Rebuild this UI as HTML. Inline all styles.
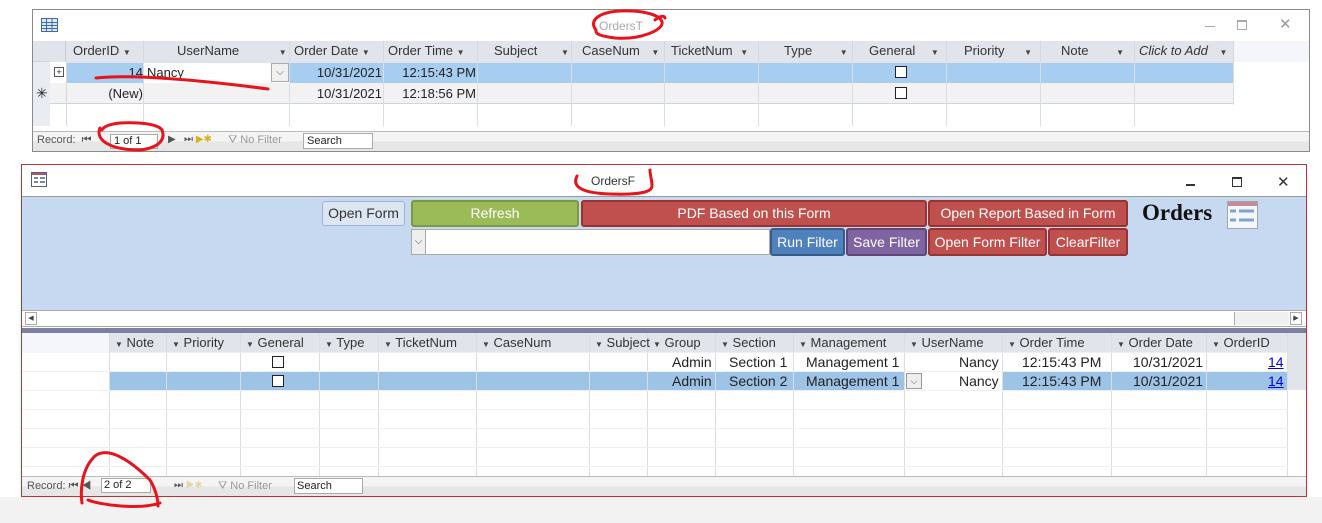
<!DOCTYPE html>
<html><head><meta charset="utf-8"><style>
*{box-sizing:border-box;margin:0;padding:0}
body{width:1322px;height:523px;background:#fff;position:relative;overflow:hidden;font-family:"Liberation Sans",sans-serif;font-size:13px;color:#222}
.a{position:absolute}
.c{position:absolute;border-right:1px solid #d4d8df;white-space:nowrap;overflow:hidden;line-height:20px}
.h{background:#e1e4ea;color:#333}
.dd{font-size:8px;color:#444}
.btn{position:absolute;border-radius:3px;color:#fff;font-size:14px;text-align:center;line-height:20px}
.cb{position:absolute;width:12px;height:12px;border:1px solid #222;background:#fff}
</style></head><body>
<div class="a" style="left:0;top:497px;width:1322px;height:26px;background:#f2f2f2"></div>

<!-- TOP WINDOW -->
<div class="a" style="left:32px;top:9px;width:1278px;height:143px;border:1px solid #8a8a8a;background:#fff"></div>
<svg class="a" style="left:41px;top:18px" width="18" height="15"><rect x="0.5" y="0.5" width="16" height="13" fill="#dfe9f7" stroke="#3d6aa8"/><path d="M1 4.5H16M1 7.5H16M1 10.5H16M5.5 1V14M11 1V14" stroke="#3d6aa8"/></svg>
<div class="a" style="left:599px;top:19px;color:#aaa;font-size:12px">OrdersT</div>
<div class="a" style="left:1205px;top:26px;width:10px;height:1px;background:#aaa"></div>
<div class="a" style="left:1237px;top:20px;width:10px;height:10px;border:1px solid #aaa;border-top-width:2px"></div>
<div class="a" style="left:1279px;top:15px;color:#999;font-size:15px">✕</div>

<div class="a h" style="left:33px;top:41px;width:1201px;height:21px"></div>
<div class="a" style="left:1234px;top:41px;width:75px;height:21px;background:#f4f6fb"></div>
<div class="a" style="left:33px;top:62px;width:17px;height:64px;background:#e9edf3"></div>
<div class="a" style="left:50px;top:62px;width:1184px;height:21px;background:#a7cdf0"></div>
<div class="a" style="left:144px;top:62px;width:146px;height:21px;background:#fff"></div>
<div class="a" style="left:50px;top:62px;width:16px;height:21px;background:#fff"></div>
<div class="a" style="left:50px;top:83px;width:1184px;height:21px;background:#f2f2f2;border-bottom:1px solid #ccd5e2"></div>
<div class="a" style="left:33px;top:61px;width:1201px;height:1px;background:#ccd5e2"></div>

<div class="c h" style="left:50px;top:41px;width:16px;height:21px;border-color:#c8ccd4"></div>
<div class="c h" style="left:66px;top:41px;width:78px;padding-left:7px">OrderID <span class="dd">▼</span></div>
<div class="c h" style="left:144px;top:41px;width:146px;padding-left:33px">UserName <span class="dd" style="margin-left:36px">▼</span></div>
<div class="c h" style="left:290px;top:41px;width:94px;padding-left:4px">Order Date <span class="dd">▼</span></div>
<div class="c h" style="left:384px;top:41px;width:94px;padding-left:4px">Order Time <span class="dd">▼</span></div>
<div class="c h" style="left:478px;top:41px;width:94px;padding-left:16px">Subject <span class="dd" style="margin-left:20px">▼</span></div>
<div class="c h" style="left:572px;top:41px;width:93px;padding-left:10px">CaseNum <span class="dd" style="margin-left:8px">▼</span></div>
<div class="c h" style="left:665px;top:41px;width:94px;padding-left:6px">TicketNum <span class="dd" style="margin-left:4px">▼</span></div>
<div class="c h" style="left:759px;top:41px;width:94px;padding-left:25px">Type <span class="dd" style="margin-left:24px">▼</span></div>
<div class="c h" style="left:853px;top:41px;width:94px;padding-left:16px">General <span class="dd" style="margin-left:12px">▼</span></div>
<div class="c h" style="left:947px;top:41px;width:94px;padding-left:17px">Priority <span class="dd" style="margin-left:16px">▼</span></div>
<div class="c h" style="left:1041px;top:41px;width:94px;padding-left:20px">Note <span class="dd" style="margin-left:24px">▼</span></div>
<div class="c h" style="left:1135px;top:41px;width:99px;padding-left:4px;font-style:italic">Click to Add <span class="dd" style="margin-left:8px">▼</span></div>

<div class="a" style="left:66px;top:62px;width:1px;height:64px;background:#d4d8df"></div>
<svg class="a" style="left:0;top:62px" width="1322" height="64"><g stroke="#d8dde6">
<path d="M143.5 0V64M289.5 0V64M383.5 0V64M477.5 0V64M571.5 0V64M664.5 0V64M758.5 0V64M852.5 0V64M946.5 0V64M1040.5 0V64M1134.5 0V64M1233.5 0V43"/></g></svg>
<div class="a" style="left:54px;top:67px;width:10px;height:10px;border:1px solid #555;font-size:9px;line-height:8px;text-align:center;background:#fff">+</div>
<div class="a" style="left:66px;top:62px;width:77px;text-align:right;line-height:21px">14</div>
<div class="a" style="left:147px;top:62px;line-height:21px">Nancy</div>
<div class="a" style="left:271px;top:63px;width:18px;height:19px;border:1px solid #aaa;background:#f0f0f0;font-size:10px;text-align:center;line-height:17px;color:#555">⌵</div>
<div class="a" style="left:290px;top:62px;width:92px;text-align:right;line-height:21px">10/31/2021</div>
<div class="a" style="left:384px;top:62px;width:92px;text-align:right;line-height:21px">12:15:43 PM</div>
<div class="cb" style="left:895px;top:66px"></div>
<div class="a" style="left:36px;top:83px;line-height:21px;font-size:14px">✳</div>
<div class="a" style="left:66px;top:83px;width:77px;text-align:right;line-height:21px">(New)</div>
<div class="a" style="left:290px;top:83px;width:92px;text-align:right;line-height:21px">10/31/2021</div>
<div class="a" style="left:384px;top:83px;width:92px;text-align:right;line-height:21px">12:18:56 PM</div>
<div class="cb" style="left:895px;top:87px"></div>

<div class="a" style="left:33px;top:131px;width:1276px;height:20px;background:linear-gradient(#f4f4f4 50%,#e6e6e6 50%);border-top:1px solid #bbb"></div>
<div class="a" style="left:37px;top:134px;font-size:11px;color:#555">Record: &nbsp;⏮</div>
<div class="a" style="left:110px;top:134px;width:48px;height:15px;border:1px solid #aaa;background:#fff;font-size:11px;padding-left:3px;line-height:13px">1 of 1</div>
<div class="a" style="left:168px;top:134px;font-size:10px;color:#555">▶ &nbsp;&nbsp;⏭ <span style="color:#d9b11a">▶✱</span></div>
<div class="a" style="left:228px;top:134px;font-size:11px;color:#999">⛛ No Filter</div>
<div class="a" style="left:303px;top:133px;width:70px;height:16px;border:1px solid #aaa;background:#fff;font-size:11px;padding-left:3px;line-height:14px">Search</div>

<!-- BOTTOM WINDOW -->
<div class="a" style="left:21px;top:164px;width:1286px;height:333px;border:1px solid #b7343a;background:#fff"></div>
<svg class="a" style="left:31px;top:172px" width="18" height="16"><rect x="0.5" y="0.5" width="15" height="14" fill="#fff" stroke="#4a5f9c"/><rect x="1" y="1" width="14" height="2" fill="#b55"/><path d="M3 6H7M9 6H14M3 10H7M9 10H14" stroke="#4a5f9c" stroke-width="1.5"/></svg>
<div class="a" style="left:591px;top:174px;font-size:12px;color:#333">OrdersF</div>
<div class="a" style="left:1186px;top:184px;width:9px;height:2px;background:#333"></div>
<div class="a" style="left:1232px;top:177px;width:10px;height:10px;border:1px solid #333;border-top-width:2px"></div>
<div class="a" style="left:1277px;top:173px;color:#333;font-size:15px">✕</div>

<div class="a" style="left:22px;top:196px;width:1284px;height:114px;background:#c6d9f0;border-top:1px solid #999"></div>
<div class="btn" style="left:322px;top:201px;width:83px;height:25px;background:#dce6f3;border:1px solid #9ab3d8;color:#333;line-height:23px">Open Form</div>
<div class="btn" style="left:411px;top:200px;width:168px;height:27px;background:#9bbb59;border:2px solid #7a9a40;line-height:23px">Refresh</div>
<div class="btn" style="left:581px;top:200px;width:346px;height:27px;background:#c0504d;border:2px solid #933;line-height:23px">PDF Based on this Form</div>
<div class="btn" style="left:928px;top:200px;width:200px;height:27px;background:#c0504d;border:2px solid #933;line-height:23px">Open Report Based in Form</div>
<div class="a" style="left:1142px;top:200px;font-family:'Liberation Serif',serif;font-weight:bold;font-size:23px;color:#111">Orders</div>
<svg class="a" style="left:1227px;top:201px" width="32" height="29"><rect x="0.5" y="0.5" width="30" height="27" fill="#f4f6fa" stroke="#9aa"/><rect x="1" y="1" width="29" height="4" fill="#c98a9a"/><path d="M3 10H9M12 10H27M3 19H9M12 19H27" stroke="#7fa3cf" stroke-width="3"/></svg>
<div class="a" style="left:411px;top:229px;width:359px;height:26px;border:1px solid #aaa;background:#fff"></div>
<div class="a" style="left:412px;top:230px;width:14px;height:24px;background:#eee;border-right:1px solid #aaa;font-size:10px;text-align:center;line-height:24px;color:#555">⌵</div>
<div class="btn" style="left:770px;top:228px;width:75px;height:28px;background:#4f81bd;border:2px solid #385d8a;line-height:24px">Run Filter</div>
<div class="btn" style="left:846px;top:228px;width:81px;height:28px;background:#8064a2;border:2px solid #5c4776;line-height:24px">Save Filter</div>
<div class="btn" style="left:928px;top:228px;width:119px;height:28px;background:#c0504d;border:2px solid #933;line-height:24px">Open Form Filter</div>
<div class="btn" style="left:1048px;top:228px;width:80px;height:28px;background:#c0504d;border:2px solid #933;line-height:24px">ClearFilter</div>

<div class="a" style="left:22px;top:310px;width:1284px;height:17px;background:#fff;border-top:1px solid #aaa;border-bottom:1px solid #aaa"></div>
<div class="a" style="left:25px;top:312px;width:12px;height:13px;border:1px solid #aaa;font-size:7px;text-align:center;line-height:11px;color:#444">◀</div>
<div class="a" style="left:1234px;top:312px;width:55px;height:13px;background:#f0f0f0;border-left:1px solid #aaa"></div>
<div class="a" style="left:1290px;top:312px;width:12px;height:13px;border:1px solid #aaa;font-size:7px;text-align:center;line-height:11px;color:#444">▶</div>
<div class="a" style="left:22px;top:328px;width:1284px;height:5px;background:#7b7fa0"></div>

<div class="a" style="left:22px;top:333px;width:88px;height:20px;background:#f4f6fb"></div>
<div class="a h" style="left:110px;top:333px;width:1178px;height:20px"></div>
<div class="a" style="left:1288px;top:333px;width:18px;height:57px;background:#e1e4ea"></div>
<div class="a" style="left:110px;top:371px;width:1178px;height:19px;background:#9dc3e6"></div>
<div class="a" style="left:905px;top:371px;width:98px;height:19px;background:#fff"></div>
<svg class="a" style="left:0;top:333px" width="1322" height="143"><g stroke="#d8dde6">
<path d="M109.5 0V143M166.5 0V143M240.5 0V143M319.5 0V143M378.5 0V143M476.5 0V143M589.5 0V143M647.5 0V143M715.5 0V143M793.5 0V143M904.5 0V143M1002.5 0V143M1111.5 0V143M1206.5 0V143M1287.5 0V143"/>
<path d="M110 19.5H1288M22 38.5H1288M22 57.5H1288M22 76.5H1288M22 95.5H1288M22 114.5H1288M22 133.5H1288" stroke="#eceff3"/></g></svg>
<div class="a" style="top:333px;left:0;line-height:20px;font-size:13px;color:#333;white-space:nowrap">
<span class="a" style="left:115px"><span class="dd">▼</span> Note</span>
<span class="a" style="left:172px"><span class="dd">▼</span> Priority</span>
<span class="a" style="left:246px"><span class="dd">▼</span> General</span>
<span class="a" style="left:325px"><span class="dd">▼</span> Type</span>
<span class="a" style="left:384px"><span class="dd">▼</span> TicketNum</span>
<span class="a" style="left:482px"><span class="dd">▼</span> CaseNum</span>
<span class="a" style="left:595px"><span class="dd">▼</span> Subject</span>
<span class="a" style="left:653px"><span class="dd">▼</span> Group</span>
<span class="a" style="left:721px"><span class="dd">▼</span> Section</span>
<span class="a" style="left:799px"><span class="dd">▼</span> Management</span>
<span class="a" style="left:910px"><span class="dd">▼</span> UserName</span>
<span class="a" style="left:1008px"><span class="dd">▼</span> Order Time</span>
<span class="a" style="left:1117px"><span class="dd">▼</span> Order Date</span>
<span class="a" style="left:1212px"><span class="dd">▼</span> OrderID</span>
</div>
<div class="a" style="top:352px;left:0;font-size:14px;line-height:20px;white-space:nowrap">
<div class="cb" style="left:272px;top:4px"></div>
<span class="a" style="left:672px">Admin</span><span class="a" style="left:729px">Section 1</span><span class="a" style="left:806px">Management 1</span><span class="a" style="left:959px">Nancy</span><span class="a" style="left:1022px">12:15:43 PM</span><span class="a" style="left:1133px">10/31/2021</span><span class="a" style="left:1268px;color:#00e;text-decoration:underline">14</span>
</div>
<div class="a" style="top:371px;left:0;font-size:14px;line-height:20px;white-space:nowrap">
<div class="cb" style="left:272px;top:4px"></div>
<span class="a" style="left:672px">Admin</span><span class="a" style="left:729px">Section 2</span><span class="a" style="left:806px">Management 1</span><span class="a" style="left:959px">Nancy</span><span class="a" style="left:1022px">12:15:43 PM</span><span class="a" style="left:1133px">10/31/2021</span><span class="a" style="left:1268px;color:#00e;text-decoration:underline">14</span>
</div>
<div class="a" style="left:906px;top:373px;width:16px;height:16px;border:1px solid #999;background:#eee;font-size:9px;text-align:center;line-height:14px;color:#555">⌵</div>

<div class="a" style="left:22px;top:476px;width:1284px;height:20px;background:linear-gradient(#f4f4f4 50%,#e6e6e6 50%);border-top:1px solid #bbb"></div>
<div class="a" style="left:27px;top:480px;font-size:11px;color:#555">Record: ⏮ ◀</div>
<div class="a" style="left:101px;top:478px;width:50px;height:15px;border:1px solid #aaa;background:#fff;font-size:11px;padding-left:2px;line-height:13px">2 of 2</div>
<div class="a" style="left:174px;top:480px;font-size:10px;color:#555">⏭ <span style="color:#e6d7a0">▶✱</span></div>
<div class="a" style="left:218px;top:480px;font-size:11px;color:#999">⛛ No Filter</div>
<div class="a" style="left:294px;top:478px;width:69px;height:16px;border:1px solid #aaa;background:#fff;font-size:11px;padding-left:2px;line-height:14px">Search</div>

<svg class="a" style="left:0;top:0" width="1322" height="523"><g fill="none" stroke="#e8141b" stroke-width="3" stroke-linecap="round">
<path d="M596 30C588 20 600 12 620 11C640 10 660 14 662 22C664 30 640 40 615 38C600 36 595 34 596 30M655 20C660 16 664 15 665 18"/>
<path d="M96 78C130 74 200 80 268 89"/>
<path d="M100 128C95 140 110 150 140 150C158 148 166 140 162 130C158 124 140 122 120 123C110 124 104 126 102 130"/>
<path d="M577 176C572 186 580 193 610 194C640 195 652 192 652 186C652 180 650 175 650 170"/>
<path d="M82 503C80 490 82 468 95 456C108 446 130 460 150 480C156 490 158 500 158 506M88 500C100 505 140 510 160 503"/>
</g></svg>
</body></html>
